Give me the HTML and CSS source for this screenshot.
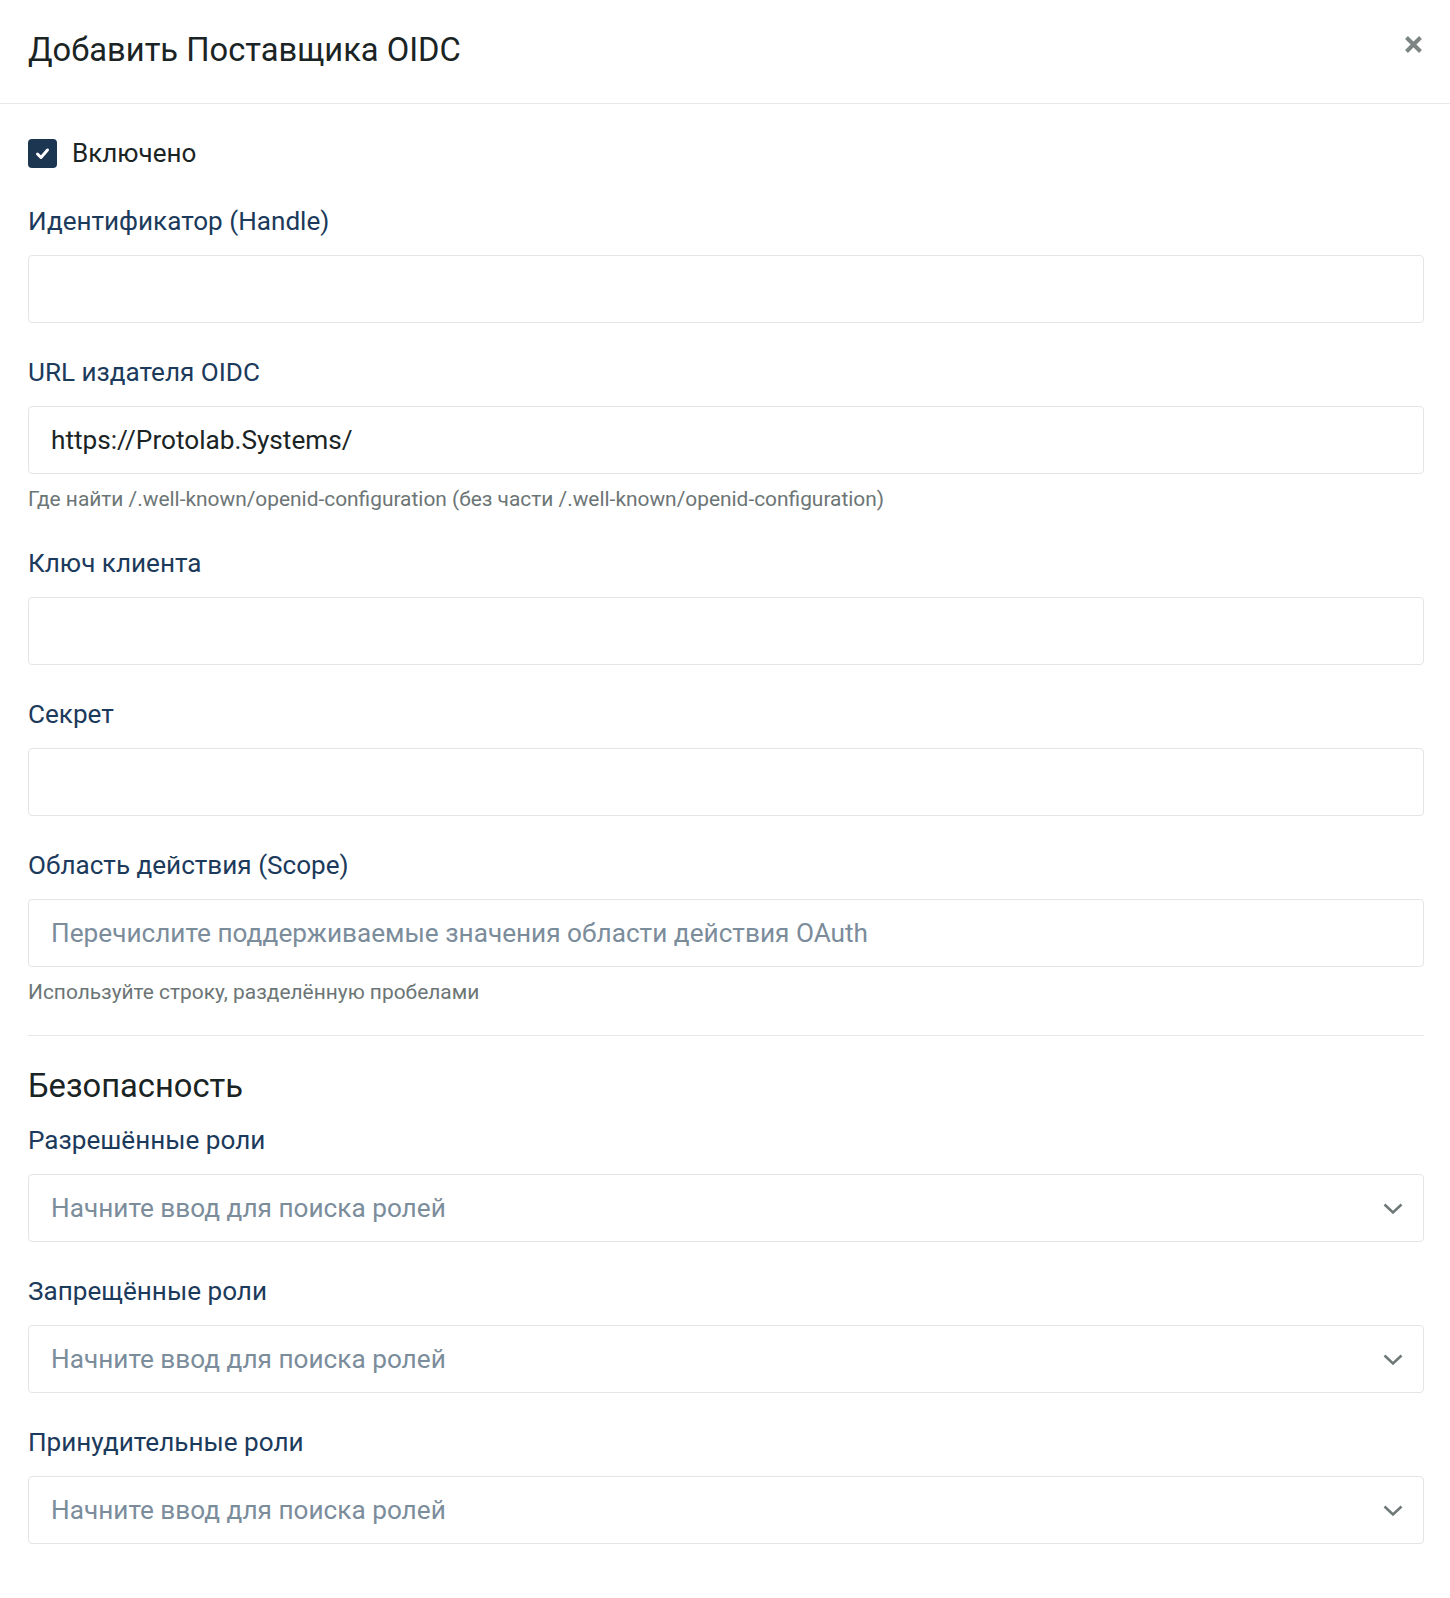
FILE: index.html
```html
<!DOCTYPE html>
<html lang="ru">
<head>
<meta charset="utf-8">
<title>Добавить Поставщика OIDC</title>
<link rel="stylesheet" href="styles.css">
</head>
<body>
<div class="modal">
  <header class="modal-header">
    <h1 class="modal-title">Добавить Поставщика OIDC</h1>
    <button class="close" type="button" aria-label="Закрыть">
      <svg width="19" height="19" viewBox="0 0 19 19"><path d="M2.5 2.5 L16.5 16.5 M16.5 2.5 L2.5 16.5" stroke="#7c8484" stroke-width="4" stroke-linecap="butt" fill="none"/></svg>
    </button>
  </header>
  <div class="modal-body">
    <label class="check-row">
      <span class="checkbox">
        <svg width="29" height="29" viewBox="0 0 29 29"><polyline points="9.5,15 13,18.5 19.5,11" fill="none" stroke="#fff" stroke-width="3" stroke-linecap="round" stroke-linejoin="round"/></svg>
      </span>
      <span class="check-label">Включено</span>
    </label>

    <div class="group">
      <label class="field-label">Идентификатор (Handle)</label>
      <div class="control"><input class="input" type="text" value=""></div>
    </div>

    <div class="group">
      <label class="field-label">URL издателя OIDC</label>
      <div class="control"><input class="input" type="text" value="https://Protolab.Systems/"></div>
      <p class="help">Где найти /.well-known/openid-configuration (без части /.well-known/openid-configuration)</p>
    </div>

    <div class="group">
      <label class="field-label">Ключ клиента</label>
      <div class="control"><input class="input" type="text" value=""></div>
    </div>

    <div class="group">
      <label class="field-label">Секрет</label>
      <div class="control"><input class="input" type="text" value=""></div>
    </div>

    <div class="group">
      <label class="field-label">Область действия (Scope)</label>
      <div class="control"><input class="input" type="text" placeholder="Перечислите поддерживаемые значения области действия OAuth"></div>
      <p class="help">Используйте строку, разделённую пробелами</p>
    </div>

    <hr class="divider">

    <h2 class="section-title">Безопасность</h2>

    <div class="group first">
      <label class="field-label">Разрешённые роли</label>
      <div class="control select"><input class="input" type="text" placeholder="Начните ввод для поиска ролей">
        <svg class="chevron" width="20" height="11" viewBox="0 0 20 11"><polyline points="1.5,1.5 10,9.5 18.5,1.5" fill="none" stroke="#6e7878" stroke-width="2.5"/></svg>
      </div>
    </div>

    <div class="group">
      <label class="field-label">Запрещённые роли</label>
      <div class="control select"><input class="input" type="text" placeholder="Начните ввод для поиска ролей">
        <svg class="chevron" width="20" height="11" viewBox="0 0 20 11"><polyline points="1.5,1.5 10,9.5 18.5,1.5" fill="none" stroke="#6e7878" stroke-width="2.5"/></svg>
      </div>
    </div>

    <div class="group">
      <label class="field-label">Принудительные роли</label>
      <div class="control select"><input class="input" type="text" placeholder="Начните ввод для поиска ролей">
        <svg class="chevron" width="20" height="11" viewBox="0 0 20 11"><polyline points="1.5,1.5 10,9.5 18.5,1.5" fill="none" stroke="#6e7878" stroke-width="2.5"/></svg>
      </div>
    </div>
  </div>
</div>
</body>
</html>
```
FILE: styles.css
```css
* { box-sizing: border-box; }

html, body {
  margin: 0;
  padding: 0;
  background: #ffffff;
}

body {
  font-family: Roboto, "Noto Sans", "Liberation Sans", sans-serif;
  color: #1b2424;
}

.modal {
  width: 1450px;
  min-height: 1598px;
  background: #fff;
}

.modal-header {
  display: flex;
  justify-content: space-between;
  align-items: flex-start;
  height: 104px;
  padding: 31px 27px 0 28px;
  border-bottom: 1px solid #e7e8e8;
}

.modal-title {
  margin: 0;
  font-size: 32.7px;
  font-weight: 400;
  line-height: 1.2;
  color: #1b2424;
}

.close {
  margin-top: 4px;
  padding: 0;
  border: none;
  background: none;
  width: 19px;
  height: 19px;
  display: flex;
  cursor: pointer;
}

.modal-body {
  padding: 35px 26px 40px 28px;
  display: flex;
  flex-direction: column;
}

.check-row {
  display: flex;
  align-items: center;
  gap: 15px;
  height: 29px;
}

.checkbox {
  width: 29px;
  height: 29px;
  border-radius: 4px;
  background: #1c3550;
  display: flex;
}

.check-label {
  font-size: 26px;
  line-height: 29px;
  color: #1b2424;
}

.group {
  display: flex;
  flex-direction: column;
  margin-top: 29px;
}

.check-row + .group {
  margin-top: 33px;
}

.group.first {
  margin-top: 14px;
}

.field-label {
  display: block;
  font-size: 26.1px;
  line-height: 40px;
  margin-bottom: 14px;
  color: #1c3a5b;
}

.control {
  display: flex;
  align-items: center;
  height: 68px;
  border: 1px solid #e3e5e8;
  border-radius: 4px;
  padding: 0 20px 0 22px;
  background: #fff;
}

.input {
  flex: 1;
  min-width: 0;
  border: none;
  outline: none;
  background: transparent;
  padding: 0;
  font-family: Roboto, "Noto Sans", "Liberation Sans", sans-serif;
  font-size: 26.2px;
  color: #1b2424;
}

.input::placeholder {
  color: #7b8c9b;
  opacity: 1;
}

.chevron {
  flex: none;
  margin-left: 12px;
}

.help {
  margin: 10px 0 0 0;
  font-size: 20.9px;
  line-height: 30px;
  color: #6c7575;
}

.divider {
  margin: 28px 0 0 0;
  border: none;
  border-top: 1px solid #e6e8ea;
  height: 0;
}

.section-title {
  margin: 31px 0 0 0;
  font-size: 32.7px;
  font-weight: 400;
  line-height: 1.2;
  color: #1b2424;
}
```
